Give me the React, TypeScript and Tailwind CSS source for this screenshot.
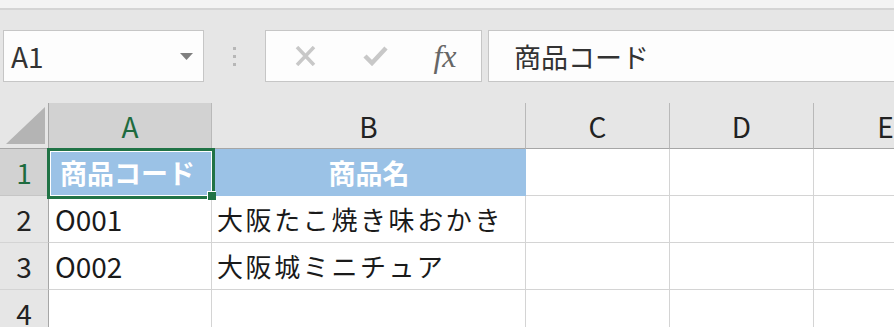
import React from 'react'

const font = { fontFamily: '"Noto Sans CJK JP", "Noto Sans", sans-serif' }

const columns = [
	{ key: 'A', selected: true },
	{ key: 'B', selected: false },
	{ key: 'C', selected: false },
	{ key: 'D', selected: false },
	{ key: 'E', selected: false },
]

const rows = [
	{ n: 1, a: '商品コード', b: '商品名', header: true },
	{ n: 2, a: 'O001', b: '大阪たこ焼き味おかき', header: false },
	{ n: 3, a: 'O002', b: '大阪城ミニチュア', header: false },
	{ n: 4, a: '', b: '', header: false },
]

function FormulaBar() {
	return (
		<div className="flex h-[93px] items-start bg-[#e6e6e6] pt-[20px]">
			{/* name box */}
			<div className="ml-[3px] flex h-[52px] w-[201px] items-center justify-between border border-[#c6c6c6] bg-[#fdfdfd] pl-[7px] pr-[10px]">
				<span className="text-[28px] leading-none text-[#333]">A1</span>
				<svg width="13" height="7" viewBox="0 0 13 7">
					<polygon points="0,0 13,0 6.5,7" fill="#7f7f7f" />
				</svg>
			</div>
			{/* drag handle */}
			<div className="flex h-[52px] w-[61px] flex-col items-center justify-center gap-[5px]">
				<span className="block h-[3px] w-[3px] bg-[#b7b7b7]" />
				<span className="block h-[3px] w-[3px] bg-[#b7b7b7]" />
				<span className="block h-[3px] w-[3px] bg-[#b7b7b7]" />
			</div>
			{/* buttons */}
			<div className="flex h-[52px] w-[217px] items-center border border-[#c6c6c6] bg-[#fdfdfd]">
				<div className="flex w-[75px] justify-center pl-[4px]">
					<svg width="21" height="20" viewBox="0 0 21 20">
						<path d="M2 1 L19 19 M19 1 L2 19" stroke="#c8c8c8" strokeWidth="3.5" />
					</svg>
				</div>
				<div className="flex w-[68px] justify-center">
					<svg width="25" height="20" viewBox="0 0 25 20">
						<path d="M2 10 L9 17 L23 2" stroke="#c8c8c8" strokeWidth="4.5" fill="none" />
					</svg>
				</div>
				<div className="flex w-[72px] justify-center">
					<span
						className="text-[32px] italic leading-none text-[#666]"
						style={{ fontFamily: '"Liberation Serif", serif' }}
					>
						fx
					</span>
				</div>
			</div>
			{/* formula input */}
			<div className="ml-[6px] flex h-[52px] flex-1 items-center border border-[#c6c6c6] border-r-0 bg-[#fdfdfd] pl-[25px]">
				<span className="text-[27px] leading-none text-[#333]">商品コード</span>
			</div>
		</div>
	)
}

function Sheet() {
	return (
		<div className="grid grid-cols-[49px_163px_314px_144px_144px_144px] grid-rows-[46px_47px_47px_47px_47px] bg-white">
			{/* corner */}
			<div className="flex items-end justify-end border-r border-b border-[#a6a6a6] bg-[#e6e6e6] pb-[4px] pr-[3px]">
				<svg width="39" height="37" viewBox="0 0 39 37">
					<polygon points="0,37 39,0 39,37" fill="#b4b4b4" />
				</svg>
			</div>
			{columns.map((c) => (
				<div
					key={c.key}
					className={
						c.selected
							? 'flex items-center justify-center border-r border-b border-r-[#b9b9b9] border-b-[#a6a6a6] bg-[#d2d2d2] text-[28px] text-[#1e6b3f]'
							: 'flex items-center justify-center border-r border-b border-r-[#b9b9b9] border-b-[#a6a6a6] bg-[#e6e6e6] text-[28px] text-[#222]'
					}
				>
					{c.key}
				</div>
			))}
			{rows.map((r) => (
				<React.Fragment key={r.n}>
					<div
						className={
							r.n === 1
								? 'flex items-center justify-center border-r border-b border-r-[#a6a6a6] border-b-[#c6c6c6] bg-[#d2d2d2] text-[28px] text-[#1e6b3f]'
								: 'flex items-center justify-center border-r border-b border-r-[#a6a6a6] border-b-[#d4d4d4] bg-[#e6e6e6] text-[28px] text-[#222]'
						}
					>
						{r.n}
					</div>
					{r.header ? (
						<>
							<div className="relative flex items-center bg-[#9bc2e6] pl-[11px]">
								<span className="text-[27px] font-bold leading-none text-white">{r.a}</span>
								<div className="absolute -top-[1px] -left-[2px] -right-[3px] -bottom-[3px] border-[3px] border-[#217346]">
									<div className="h-full w-full border border-white" />
								</div>
								<div className="absolute -right-[4px] -bottom-[4px] h-[9px] w-[9px] border-t border-l border-white bg-[#217346]" />
							</div>
							<div className="flex items-center justify-center bg-[#9bc2e6]">
								<span className="text-[27px] font-bold leading-none text-white">{r.b}</span>
							</div>
						</>
					) : (
						<>
							<div className="flex items-center border-r border-b border-[#d4d4d4] pl-[6px]">
								<span className="text-[28px] leading-none text-[#1a1a1a]">{r.a}</span>
							</div>
							<div className="flex items-center border-r border-b border-[#d4d4d4] pl-[5px]">
								<span className="text-[26px] leading-none tracking-[2.6px] text-[#1a1a1a]">{r.b}</span>
							</div>
						</>
					)}
					<div className="border-r border-b border-[#d4d4d4]" />
					<div className="border-r border-b border-[#d4d4d4]" />
					<div className="border-b border-[#d4d4d4]" />
				</React.Fragment>
			))}
		</div>
	)
}

export default function App() {
	return (
		<div className="h-[327px] w-[894px] overflow-hidden bg-[#e6e6e6]" style={font}>
			<div className="h-[10px] border-b-2 border-[#d4d4d4] bg-[#f3f3f3]" />
			<FormulaBar />
			<Sheet />
		</div>
	)
}
